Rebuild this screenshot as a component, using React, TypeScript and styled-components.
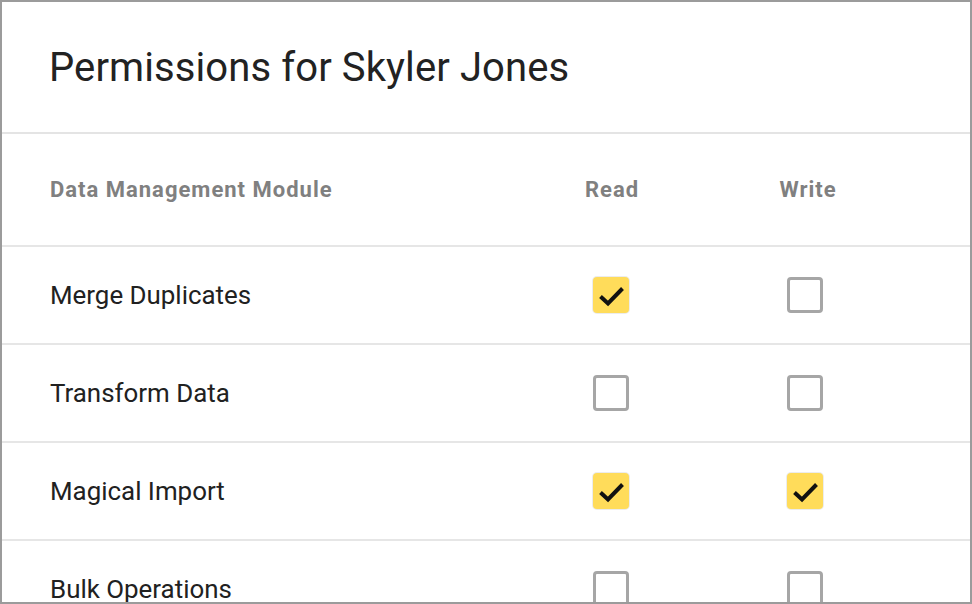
import { createGlobalStyle } from 'styled-components';
import styled from 'styled-components';

const GlobalStyle = createGlobalStyle`
  html, body {
    margin: 0;
    padding: 0;
    background: white;
  }
  body {
    font-family: Roboto, 'Liberation Sans', sans-serif;
  }
`;

const Card = styled.div`
  width: 972px;
  height: 604px;
  box-sizing: border-box;
  border: 2px solid #9b9b9b;
  background: white;
  overflow: hidden;
`;

const Header = styled.div`
  height: 130px;
  display: flex;
  align-items: center;
  padding-left: 47px;
  border-bottom: 2px solid #e4e4e4;
`;

const Title = styled.h1`
  margin: 0;
  font-size: 40px;
  font-weight: 400;
  color: #222;
  letter-spacing: 0.1px;
`;

const Row = styled.div<{ height: number }>`
  display: grid;
  grid-template-columns: 1fr 196px 196px;
  align-items: center;
  height: ${({ height }) => height}px;
  padding: 0 64px 0 48px;
  border-bottom: 2px solid #e6e6e6;
`;

const HeadCell = styled.div<{ center?: boolean }>`
  font-size: 22px;
  font-weight: 700;
  letter-spacing: 1px;
  color: #808080;
  text-align: ${({ center }) => (center ? 'center' : 'left')};
`;

const Label = styled.div`
  font-size: 25.9px;
  color: #212121;
`;

const Cell = styled.div`
  display: flex;
  justify-content: center;
`;

const WriteCell = styled(Cell)`
  padding-right: 4px;
`;

const Box = styled.span<{ checked: boolean }>`
  width: 36px;
  height: 36px;
  box-sizing: border-box;
  border-radius: 4px;
  display: flex;
  align-items: center;
  justify-content: center;
  margin-right: 2px;
  ${({ checked }) =>
    checked
      ? `
    background: #ffdc5a;
    box-shadow: 0 0 0 1px #ececec;
  `
      : `
    border: 3px solid #a6a6a6;
  `}
`;

const Checkbox = ({ checked }: { checked: boolean }) => (
  <Box checked={checked}>
    {checked && (
      <svg width='36' height='36' viewBox='0 0 36 36'>
        <path
          d='M7.5 19.5 L15 26.5 L29.5 11.5'
          fill='none'
          stroke='#111'
          strokeWidth='4'
        />
      </svg>
    )}
  </Box>
);

const permissions = [
  { name: 'Merge Duplicates', read: true, write: false },
  { name: 'Transform Data', read: false, write: false },
  { name: 'Magical Import', read: true, write: true },
  { name: 'Bulk Operations', read: false, write: false },
];

export default function App() {
  return (
    <Card>
      <GlobalStyle />
      <Header>
        <Title>Permissions for Skyler Jones</Title>
      </Header>
      <Row height={111}>
        <HeadCell>Data Management Module</HeadCell>
        <HeadCell center>Read</HeadCell>
        <HeadCell center>Write</HeadCell>
      </Row>
      {permissions.map((p) => (
        <Row height={96} key={p.name}>
          <Label>{p.name}</Label>
          <Cell>
            <Checkbox checked={p.read} />
          </Cell>
          <WriteCell>
            <Checkbox checked={p.write} />
          </WriteCell>
        </Row>
      ))}
    </Card>
  );
}
